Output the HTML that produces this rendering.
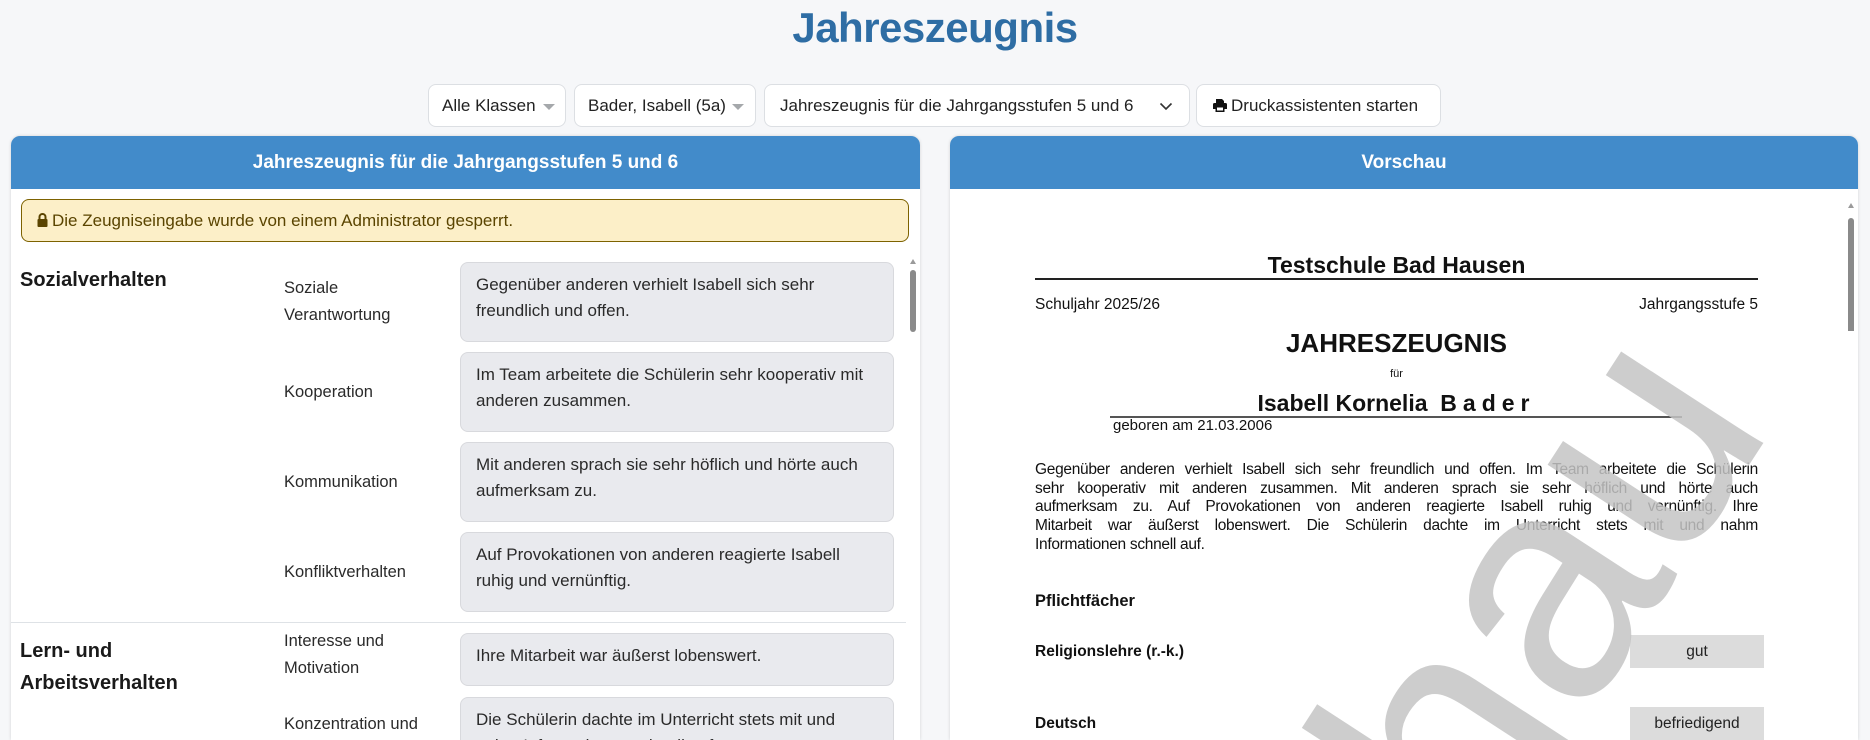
<!DOCTYPE html>
<html><head><meta charset="utf-8">
<style>
*{box-sizing:border-box;margin:0;padding:0}
body{width:1870px;height:740px;overflow:hidden;background:#f6f7f9;font-family:"Liberation Sans",Arial,sans-serif;color:#212529;position:relative}
.abs{position:absolute}
h1{position:absolute;left:0;width:1870px;top:4px;text-align:center;font-size:42px;font-weight:bold;color:#2e6da4;letter-spacing:-0.5px}
.ctl{position:absolute;top:84px;height:43px;background:#fff;border:1px solid #dcdfe3;border-radius:8px;font-size:17px;line-height:41px;padding-left:13px;color:#222;white-space:nowrap}
.caret{position:absolute;top:19px;width:0;height:0;border-left:6px solid transparent;border-right:6px solid transparent;border-top:6px solid #a5a8ab}
.panel{position:absolute;top:136px;height:604px;background:#fff;border-radius:9px 9px 0 0;box-shadow:0 0 3px rgba(0,0,0,.15);overflow:hidden}
.ph{height:53px;background:#428bca;color:#fff;font-weight:bold;font-size:19px;text-align:center;line-height:53px}
.alert{position:absolute;left:10px;top:63px;width:888px;height:43px;background:#fcefc8;border:1px solid #7d6200;border-radius:8px;color:#5a4400;font-size:17px;line-height:41px;padding-left:15px}
.ta{position:absolute;left:449px;width:434px;background:#e9eaee;border:1px solid #d8d9dd;border-radius:8px;font-size:17px;line-height:26px;padding:9px 15px;color:#2a2a2a}
.lb{position:absolute;left:273px;width:160px;font-size:16.5px;line-height:27px;color:#2a2a2a;display:flex;align-items:center}
.sec{position:absolute;left:9px;font-weight:bold;font-size:20px;line-height:32px;color:#1a1a1a}
.doc{position:absolute;font-family:"Liberation Sans",Arial,sans-serif;color:#111}
.jl{text-align:justify;text-align-last:justify;white-space:nowrap;height:18.7px}
</style></head><body>
<h1>Jahreszeugnis</h1>

<div class="ctl" style="left:428px;width:138px">Alle Klassen<span class="caret" style="left:114px"></span></div>
<div class="ctl" style="left:574px;width:182px">Bader, Isabell (5a)<span class="caret" style="left:157px"></span></div>
<div class="ctl" style="left:764px;width:426px;padding-left:15px">Jahreszeugnis für die Jahrgangsstufen 5 und 6
<svg class="abs" style="left:394px;top:15px" width="14" height="12" viewBox="0 0 14 12"><path d="M1.5 3.5 L7 9 L12.5 3.5" fill="none" stroke="#333" stroke-width="1.6"/></svg></div>
<div class="ctl" style="left:1196px;width:245px;padding-left:15px">
<svg style="vertical-align:-2px;margin-right:3px" width="16" height="15" viewBox="0 0 16 15"><path d="M4 1h6l2 2v3H4z M1 6.5a1.5 1.5 0 0 1 1.5-1.5h11A1.5 1.5 0 0 1 15 6.5V11h-2.5v3h-9v-3H1z" fill="#111"/><rect x="5" y="9.5" width="6" height="3" fill="#fff"/></svg>Druckassistenten starten</div>

<div class="panel" style="left:11px;width:909px">
<div class="ph">Jahreszeugnis für die Jahrgangsstufen 5 und 6</div>
<div class="alert"><svg style="vertical-align:-1px;margin-right:4px" width="11" height="14" viewBox="0 0 11 14"><path d="M2.5 6V4a3 3 0 0 1 6 0v2" fill="none" stroke="#5a4400" stroke-width="2"/><rect x="0.5" y="6" width="10" height="8" rx="1" fill="#5a4400"/></svg>Die Zeugniseingabe wurde von einem Administrator gesperrt.</div>

<div class="sec" style="top:128px">Sozialverhalten</div>
<div class="lb" style="top:126px;height:80px">Soziale<br>Verantwortung</div>
<div class="ta" style="top:126px;height:80px">Gegenüber anderen verhielt Isabell sich sehr freundlich und offen.</div>
<div class="lb" style="top:216px;height:80px">Kooperation</div>
<div class="ta" style="top:216px;height:80px">Im Team arbeitete die Schülerin sehr kooperativ mit anderen zusammen.</div>
<div class="lb" style="top:306px;height:80px">Kommunikation</div>
<div class="ta" style="top:306px;height:80px">Mit anderen sprach sie sehr höflich und hörte auch aufmerksam zu.</div>
<div class="lb" style="top:396px;height:80px">Konfliktverhalten</div>
<div class="ta" style="top:396px;height:80px">Auf Provokationen von anderen reagierte Isabell ruhig und vernünftig.</div>
<div class="abs" style="left:0;top:486px;width:895px;height:1px;background:#dee2e6"></div>
<div class="sec" style="top:499px">Lern- und<br>Arbeitsverhalten</div>
<div class="lb" style="top:490px;height:60px;align-items:flex-start;padding-top:2px">Interesse und<br>Motivation</div>
<div class="ta" style="top:497px;height:53px">Ihre Mitarbeit war äußerst lobenswert.</div>
<div class="lb" style="top:572px;height:32px;align-items:flex-start;padding-top:3px;overflow:hidden">Konzentration und</div>
<div class="ta" style="top:561px;height:60px;overflow:hidden">Die Schülerin dachte im Unterricht stets mit und nahm Informationen schnell auf.</div>
<svg class="abs" style="left:897px;top:121px" width="10" height="80"><path d="M5 2 L8 7 H2z" fill="#9a9a9a"/><rect x="2" y="13" width="6" height="62" rx="3" fill="#8a8a8a"/></svg>
</div>

<div class="panel" style="left:950px;width:908px">
<div class="ph">Vorschau</div>
<div class="abs" style="left:0;top:53px;width:908px;height:551px;overflow:hidden">
<div style="position:absolute;left:-950px;top:-189px;width:1870px;height:740px">
<div class="doc" style="left:1035px;width:723px;top:252px;text-align:center;font-weight:bold;font-size:23px">Testschule Bad Hausen</div>
<div class="abs" style="left:1035px;width:723px;top:278px;height:2px;background:#222"></div>
<div class="doc" style="left:1035px;top:296px;font-size:15.5px">Schuljahr 2025/26</div>
<div class="doc" style="left:1558px;width:200px;text-align:right;top:296px;font-size:15.5px">Jahrgangsstufe 5</div>
<div class="doc" style="left:1035px;width:723px;top:328px;text-align:center;font-weight:bold;font-size:26px">JAHRESZEUGNIS</div>
<div class="doc" style="left:1035px;width:723px;top:368px;text-align:center;font-size:11px">für</div>
<div class="doc" style="left:1035px;width:723px;top:390px;text-align:center;font-weight:bold;font-size:23px">Isabell Kornelia &nbsp;<span style="letter-spacing:6px">Bader</span></div>
<div class="abs" style="left:1110px;width:572px;top:416px;height:2px;background:#555"></div>
<div class="doc" style="left:1113px;top:417px;font-size:15px">geboren am 21.03.2006</div>
<div class="doc" style="left:1035px;width:723px;top:461px;font-size:15.5px;line-height:18.7px;letter-spacing:-0.3px">
<div class="jl">Gegenüber anderen verhielt Isabell sich sehr freundlich und offen. Im Team arbeitete die Schülerin</div>
<div class="jl">sehr kooperativ mit anderen zusammen. Mit anderen sprach sie sehr höflich und hörte auch</div>
<div class="jl">aufmerksam zu. Auf Provokationen von anderen reagierte Isabell ruhig und vernünftig. Ihre</div>
<div class="jl">Mitarbeit war äußerst lobenswert. Die Schülerin dachte im Unterricht stets mit und nahm</div>
<div>Informationen schnell auf.</div>
</div>
<div class="doc" style="left:1035px;top:592px;font-weight:bold;font-size:16.5px">Pflichtfächer</div>
<div class="doc" style="left:1035px;top:643px;font-weight:bold;font-size:15.5px">Religionslehre (r.-k.)</div>
<div class="abs" style="left:1630px;top:635px;width:134px;height:33px;background:#dcdcdc;font-size:15.5px;text-align:center;line-height:33px;color:#222">gut</div>
<div class="doc" style="left:1035px;top:715px;font-weight:bold;font-size:15.5px">Deutsch</div>
<div class="abs" style="left:1630px;top:707px;width:134px;height:33px;background:#dcdcdc;font-size:15.5px;text-align:center;line-height:33px;color:#222">befriedigend</div>
<svg class="abs" style="left:0;top:0" width="1870" height="740"><text x="1775" y="425" text-anchor="end" transform="rotate(-57 1775 425)" font-family="Liberation Sans, sans-serif" font-size="320" fill="#c4c4c4" fill-opacity="0.85">Vorschau</text></svg>
</div>
<svg class="abs" style="left:896px;top:12px" width="10" height="130"><path d="M5 2 L8 7 H2z" fill="#9a9a9a"/><rect x="2" y="17" width="6" height="116" rx="3" fill="#8a8a8a"/></svg>
</div>
</div>
</body></html>
